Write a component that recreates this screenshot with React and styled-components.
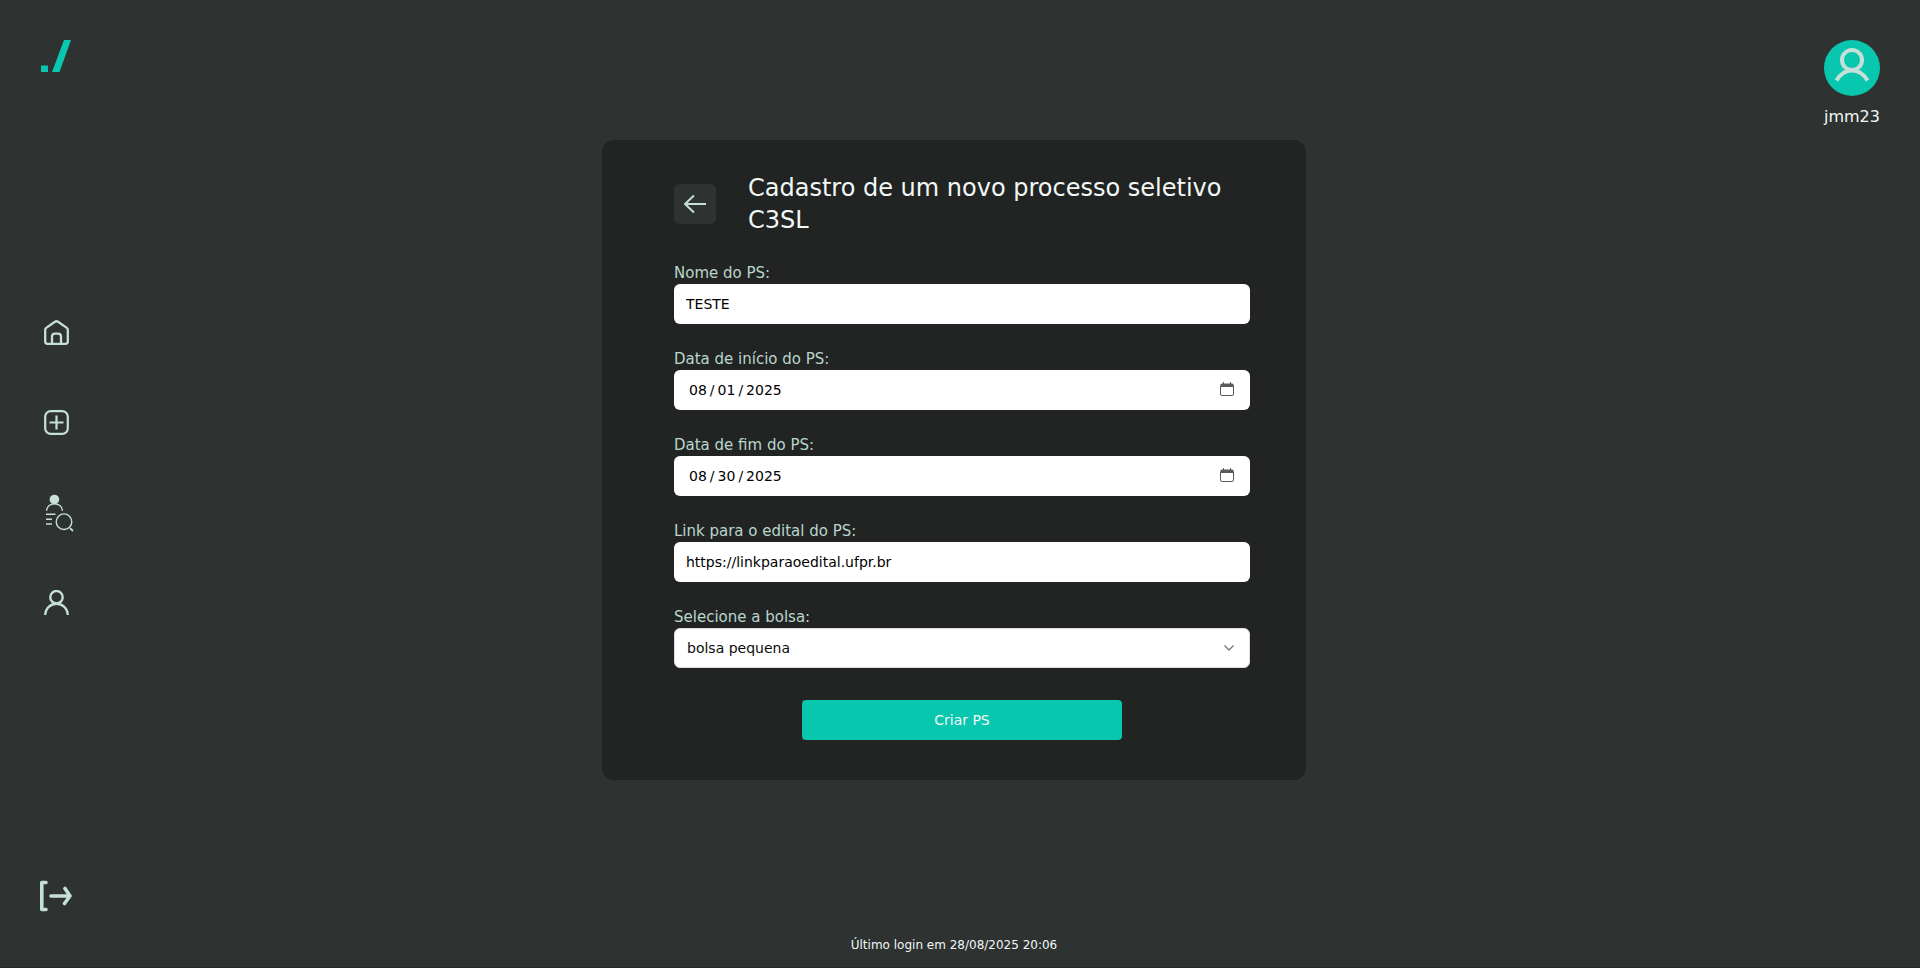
import React, { useState } from "react";
import styled, { createGlobalStyle, ThemeProvider } from "styled-components";

const theme = {
  colors: {
    background: "#2e3231",
    card: "#222423",
    turquoise: "#09c6ae",
    mint: "#c5e0d8",
    label: "#b9d6cd",
    text: "#f2f8f6",
    white: "#ffffff",
    black: "#000000"
  }
};

const GlobalStyle = createGlobalStyle`
  * {
    box-sizing: border-box;
  }

  body {
    margin: 0;
    background-color: #2e3231;
    font-family: "DejaVu Sans", sans-serif;
  }

  button, input, select {
    font-family: inherit;
  }
`;

const Page = styled.div`
  display: flex;
  min-height: 100vh;
  color: ${props => props.theme.colors.text};
  background-color: ${props => props.theme.colors.background};
  border-bottom: 1px solid #2b262a;
`;

const Sidebar = styled.aside`
  display: flex;
  flex-direction: column;
  justify-content: space-between;
  width: 84px;
  padding: 40px 12px 55px 40px;
`;

const Nav = styled.nav`
  display: flex;
  flex-direction: column;
  gap: 50px;
  margin-bottom: 16px;
`;

const IconLink = styled.a`
  display: flex;
  align-items: center;
  justify-content: center;
  width: 32px;
  height: ${props => props.$height || 40}px;
  color: ${props => props.theme.colors.mint};

  svg {
    flex-shrink: 0;
  }
`;

const Main = styled.main`
  display: flex;
  flex: 1;
  flex-direction: column;
  align-items: center;
  padding-top: 140px;
`;

const Card = styled.section`
  width: 100%;
  max-width: 704px;
  padding: 32px 56px 40px 72px;
  border-radius: 12px;
  background-color: ${props => props.theme.colors.card};
`;

const CardHeader = styled.header`
  display: flex;
  align-items: center;
  gap: 32px;
  margin-bottom: 26px;
`;

const BackButton = styled.button`
  display: flex;
  flex-shrink: 0;
  align-items: center;
  justify-content: center;
  width: 42px;
  height: 40px;
  padding: 0;
  border: 0;
  border-radius: 6px;
  color: ${props => props.theme.colors.mint};
  background-color: ${props => props.theme.colors.background};
  cursor: pointer;
`;

const Title = styled.h1`
  margin: 0;
  font-size: 24px;
  font-weight: 400;
  line-height: 32px;
`;

const Form = styled.form`
  display: flex;
  flex-direction: column;
  gap: 24px;
`;

const Label = styled.label`
  display: block;
  font-size: 15px;
  line-height: 22px;
  color: ${props => props.theme.colors.label};
`;

const Control = styled.div`
  position: relative;

  svg {
    position: absolute;
    top: 0;
    right: 16px;
    bottom: 0;
    margin: auto 0;
    pointer-events: none;
  }
`;

const Input = styled.input`
  display: block;
  width: 100%;
  height: 40px;
  padding: 0 12px;
  border: 0;
  border-radius: 6px;
  font-size: 14px;
  color: ${props => props.theme.colors.black};
  background-color: ${props => props.theme.colors.white};
`;

const DateInput = styled(Input)`
  padding: 0 14px;

  &::-webkit-datetime-edit-fields-wrapper {
    padding: 0;
  }

  &::-webkit-datetime-edit-text {
    padding: 0 2px;
  }

  &::-webkit-calendar-picker-indicator {
    opacity: 0;
  }
`;

const Select = styled.select`
  display: block;
  width: 100%;
  height: 40px;
  padding: 0 12px;
  border: 1px solid #dedede;
  border-radius: 6px;
  appearance: none;
  font-size: 14px;
  color: #0c0c0d;
  background-color: ${props => props.theme.colors.white};
`;

const SubmitButton = styled.button`
  align-self: center;
  width: 100%;
  max-width: 320px;
  height: 40px;
  margin-top: 8px;
  border: 0;
  border-radius: 4px;
  font-size: 14px;
  color: ${props => props.theme.colors.text};
  background-color: ${props => props.theme.colors.turquoise};
  cursor: pointer;
`;

const LastLogin = styled.p`
  margin: auto 0 0;
  padding-bottom: 13px;
  font-size: 12px;
  line-height: 18px;
`;

const Profile = styled.div`
  display: flex;
  flex-direction: column;
  align-items: center;
  gap: 8px;
  width: 96px;
  padding: 40px 40px 0 0;
  line-height: 26px;
`;

const Avatar = styled.div`
  display: flex;
  justify-content: center;
  width: 56px;
  height: 56px;
  border-radius: 50%;
  color: ${props => props.theme.colors.mint};
  background-color: ${props => props.theme.colors.turquoise};
`;

const Logo = () => (
  <svg width="32" height="32" viewBox="0 0 32 32" fill="#09c6ae">
    <rect x="1" y="25.5" width="7" height="6.5" />
    <polygon points="24,0 31,0 19.5,32 12,32" />
  </svg>
);

const HomeIcon = () => (
  <svg width="26" height="26" viewBox="0 0 26 26" fill="none" stroke="currentColor" strokeWidth="2.3" strokeLinejoin="round">
    <path d="M2.2 10Q2.2 8.6 3.2 7.9L12 1.7Q13.5 .8 15 1.7L23.8 7.9Q24.8 8.6 24.8 10V21.5Q24.8 23.8 22.5 23.8H4.5Q2.2 23.8 2.2 21.5Z" />
    <path d="M9 23.8V16.6Q9 13.6 12 13.6H15Q18 13.6 18 16.6V23.8" />
  </svg>
);

const PlusIcon = () => (
  <svg width="26" height="26" viewBox="0 0 26 26" fill="none" stroke="currentColor" strokeWidth="2.2">
    <rect x="2.2" y="1.2" width="22.6" height="22.6" rx="5.5" />
    <path d="M13.5 5.5V19.5M6.5 12.5H20.5" />
  </svg>
);

const SearchUserIcon = () => (
  <svg width="32" height="40" viewBox="0 0 32 40" fill="none" stroke="currentColor" strokeWidth="1.4">
    <circle cx="14.4" cy="6.5" r="4.8" fill="currentColor" stroke="none" />
    <path d="M6.6 17.8C7 8.5 22 8.500 22.400 17.800" />
    <path d="M6 21.200H15.500M6 26.300H12M6 31H12" />
    <circle cx="24" cy="28.700" r="7.800" />
    <path d="M30 35.200L33 38" strokeWidth="1.800" />
  </svg>
);

const SearchLink = styled(IconLink)`
  svg {
    overflow: visible;
  }
`;

const UserIcon = () => (
  <svg width="26" height="26" viewBox="0 0 26 26" fill="none" stroke="currentColor" strokeWidth="2.4">
    <circle cx="13.5" cy="7.2" r="6.2" />
    <path d="M2.200 25C3.200 10 23.800 10 24.800 25" />
  </svg>
);

const LogoutIcon = () => (
  <svg width="32" height="32" viewBox="0 0 32 32" fill="none" stroke="currentColor" strokeLinecap="round" strokeLinejoin="round">
    <path d="M6 2.500H1.800V29.500H6" strokeWidth="3.600" />
    <path d="M11 16H30M25 8.500L30 16L24.500 23.500" strokeWidth="3.600" />
  </svg>
);

const ArrowIcon = () => (
  <svg width="24" height="20" viewBox="0 0 24 20" fill="none" stroke="currentColor" strokeWidth="2" strokeLinejoin="round">
    <path d="M23 10H2M11 1.500L2 10L11 18.500" />
  </svg>
);

const AvatarIcon = () => (
  <svg width="56" height="56" viewBox="0 0 56 56" fill="none" stroke="currentColor" strokeWidth="4">
    <circle cx="28" cy="20" r="10" />
    <path d="M12.500 40.500C20 27 36 27 43.500 40.500" />
  </svg>
);

const CalendarIcon = () => (
  <svg width="14" height="16" viewBox="0 0 14 16" fill="none" stroke="#5b5b5d">
    <rect x=".5" y="2" width="13" height="11.500" rx="1.500" />
    <path d="M1 3.500H13" strokeWidth="3" />
    <path d="M3.500 0V3M10.500 0V3" />
  </svg>
);

const ChevronIcon = () => (
  <svg width="10" height="6" viewBox="0 0 10 6" fill="none" stroke="#77777a" strokeWidth="1.300">
    <path d="M.5 .5L5 5L9.500 .5" />
  </svg>
);

const fields = [
  { name: "nome", label: "Nome do PS:", type: "text" },
  { name: "inicio", label: "Data de início do PS:", type: "date" },
  { name: "fim", label: "Data de fim do PS:", type: "date" },
  { name: "edital", label: "Link para o edital do PS:", type: "url" }
];

const App = () => {
  const [values, setValues] = useState({
    nome: "TESTE",
    inicio: "2025-08-01",
    fim: "2025-08-30",
    edital: "https://linkparaoedital.ufpr.br",
    bolsa: "pequena"
  });

  const handleChange = e =>
    setValues({ ...values, [e.target.name]: e.target.value });

  return (
    <ThemeProvider theme={theme}>
      <GlobalStyle />
      <Page>
        <Sidebar>
          <IconLink href="#" $height={32} aria-label="C3SL">
            <Logo />
          </IconLink>
          <Nav>
            <IconLink href="#" aria-label="Início">
              <HomeIcon />
            </IconLink>
            <IconLink href="#" aria-label="Novo processo seletivo">
              <PlusIcon />
            </IconLink>
            <SearchLink href="#" aria-label="Buscar candidatos">
              <SearchUserIcon />
            </SearchLink>
            <IconLink href="#" aria-label="Perfil">
              <UserIcon />
            </IconLink>
          </Nav>
          <IconLink href="#" $height={32} aria-label="Sair">
            <LogoutIcon />
          </IconLink>
        </Sidebar>

        <Main>
          <Card>
            <CardHeader>
              <BackButton type="button" aria-label="Voltar">
                <ArrowIcon />
              </BackButton>
              <Title>Cadastro de um novo processo seletivo C3SL</Title>
            </CardHeader>
            <Form onSubmit={e => e.preventDefault()}>
              {fields.map(({ name, label, type }) => {
                const Field = type === "date" ? DateInput : Input;
                return (
                  <div key={name}>
                    <Label htmlFor={name}>{label}</Label>
                    <Control>
                      <Field
                        id={name}
                        name={name}
                        type={type}
                        value={values[name]}
                        onChange={handleChange}
                      />
                      {type === "date" && <CalendarIcon />}
                    </Control>
                  </div>
                );
              })}
              <div>
                <Label htmlFor="bolsa">Selecione a bolsa:</Label>
                <Control>
                  <Select
                    id="bolsa"
                    name="bolsa"
                    value={values.bolsa}
                    onChange={handleChange}
                  >
                    <option value="pequena">bolsa pequena</option>
                  </Select>
                  <ChevronIcon />
                </Control>
              </div>
              <SubmitButton type="submit">Criar PS</SubmitButton>
            </Form>
          </Card>
          <LastLogin>Último login em 28/08/2025 20:06</LastLogin>
        </Main>

        <Profile>
          <Avatar>
            <AvatarIcon />
          </Avatar>
          <span>jmm23</span>
        </Profile>
      </Page>
    </ThemeProvider>
  );
};

export default App;
